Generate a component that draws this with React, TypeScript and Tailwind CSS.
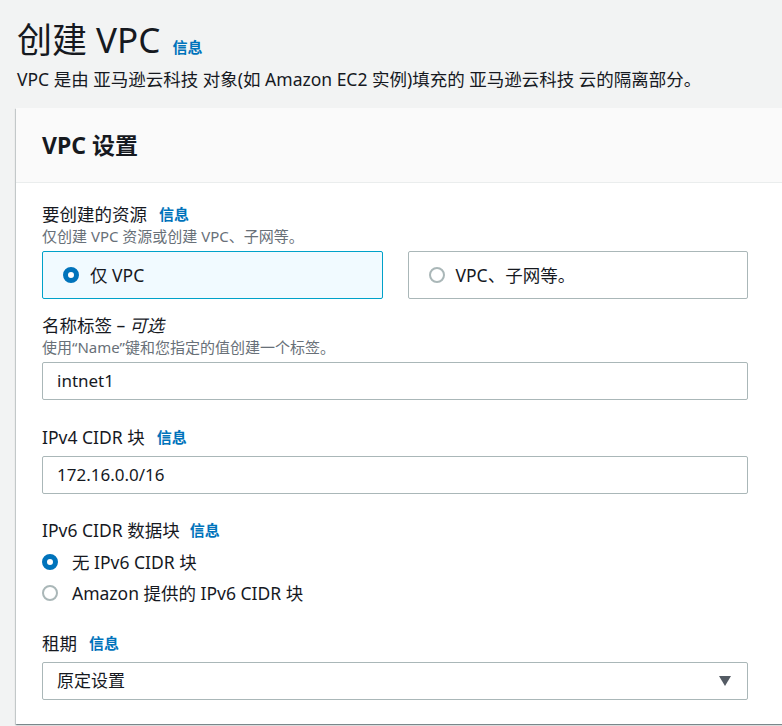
import React from "react";

const font = { fontFamily: '"Noto Sans", "Noto Sans CJK SC", sans-serif' };

function Info({ className = "" }: { className?: string }) {
  return <span className={`text-[15px] font-bold text-[#0073bb] ${className}`}>信息</span>;
}

function Radio({ checked }: { checked?: boolean }) {
  return checked ? (
    <span className="block w-4 h-4 rounded-full border-[5px] border-[#0073bb] bg-white shrink-0" />
  ) : (
    <span className="block w-4 h-4 rounded-full border-2 border-[#aab7b8] bg-white shrink-0" />
  );
}

function Label({ children }: { children: React.ReactNode }) {
  return <div className="text-[17.5px] leading-[22px] text-[#16191f] flex items-center">{children}</div>;
}

function Desc({ children }: { children: React.ReactNode }) {
  return <div className="text-[15px] leading-[18px] text-[#687078] mt-[2px]">{children}</div>;
}

function TextBox({ value, className = "" }: { value: string; className?: string }) {
  return (
    <div
      className={`h-[38px] w-[706px] border border-[#aab7b8] rounded-[2px] bg-white flex items-center px-[14px] text-[17px] text-[#16191f] ${className}`}
    >
      {value}
    </div>
  );
}

export default function App() {
  return (
    <div className="w-[782px] h-[726px] overflow-hidden bg-[#f2f3f3] text-[#16191f]" style={font}>
      <div className="pl-[17px] pt-[18px] flex items-baseline gap-[12px]">
        <h1 className="text-[35px] leading-[44px] font-normal">创建 VPC</h1>
        <Info />
      </div>
      <p className="pl-[17px] text-[17.5px] leading-[22px] mt-[6px]">
        VPC 是由 亚马逊云科技 对象(如 Amazon EC2 实例)填充的 亚马逊云科技 云的隔离部分。
      </p>
      <div className="ml-4 mt-[18px] w-[800px] bg-white shadow-[0_1px_1px_0_rgba(0,28,36,0.3),1px_1px_1px_0_rgba(0,28,36,0.15),-1px_1px_1px_0_rgba(0,28,36,0.15)]">
        <div className="h-[75px] bg-[#fafafa] border-b border-[#eaeded] flex items-center px-[26px]">
          <h2 className="text-[23px] font-bold">VPC 设置</h2>
        </div>
        <div className="px-[26px] pt-[20px] pb-[24px]">
          <Label>
            要创建的资源 <Info className="ml-[12px]" />
          </Label>
          <Desc>仅创建 VPC 资源或创建 VPC、子网等。</Desc>
          <div className="flex gap-[25px] mt-[6px] w-[706px]">
            <div className="flex-1 h-[48px] border border-[#00a1c9] bg-[#f1faff] rounded-[2px] flex items-center pl-[20px] gap-[11px] text-[17.5px]">
              <Radio checked />
              仅 VPC
            </div>
            <div className="flex-1 h-[48px] border border-[#aab7b8] bg-white rounded-[2px] flex items-center pl-[20px] gap-[11px] text-[17.5px]">
              <Radio />
              VPC、子网等。
            </div>
          </div>

          <div className="mt-[15px]">
            <Label>
              名称标签 – <i className="ml-[4px]">可选</i>
            </Label>
            <Desc>使用“Name”键和您指定的值创建一个标签。</Desc>
            <TextBox value="intnet1" className="mt-[6px]" />
          </div>

          <div className="mt-[26px]">
            <Label>
              IPv4 CIDR 块 <Info className="ml-[12px]" />
            </Label>
            <TextBox value="172.16.0.0/16" className="mt-[8px]" />
          </div>

          <div className="mt-[25px]">
            <Label>
              IPv6 CIDR 数据块 <Info className="ml-[10px]" />
            </Label>
            <div className="mt-[9px] flex items-center gap-[14px] h-[24px] text-[17.5px]">
              <Radio checked />
              无 IPv6 CIDR 块
            </div>
            <div className="mt-[7px] flex items-center gap-[14px] h-[24px] text-[17.5px]">
              <Radio />
              Amazon 提供的 IPv6 CIDR 块
            </div>
          </div>

          <div className="mt-[27px]">
            <Label>
              租期 <Info className="ml-[12px]" />
            </Label>
            <div className="mt-[8px] h-[38px] w-[706px] border border-[#aab7b8] rounded-[2px] bg-white flex items-center justify-between pl-[14px] pr-[16px] text-[17px]">
              <span>原定设置</span>
              <svg width="12" height="10" viewBox="0 0 12 10">
                <path d="M0 0 H12 L6 10 Z" fill="#545b64" />
              </svg>
            </div>
          </div>
        </div>
      </div>
    </div>
  );
}
